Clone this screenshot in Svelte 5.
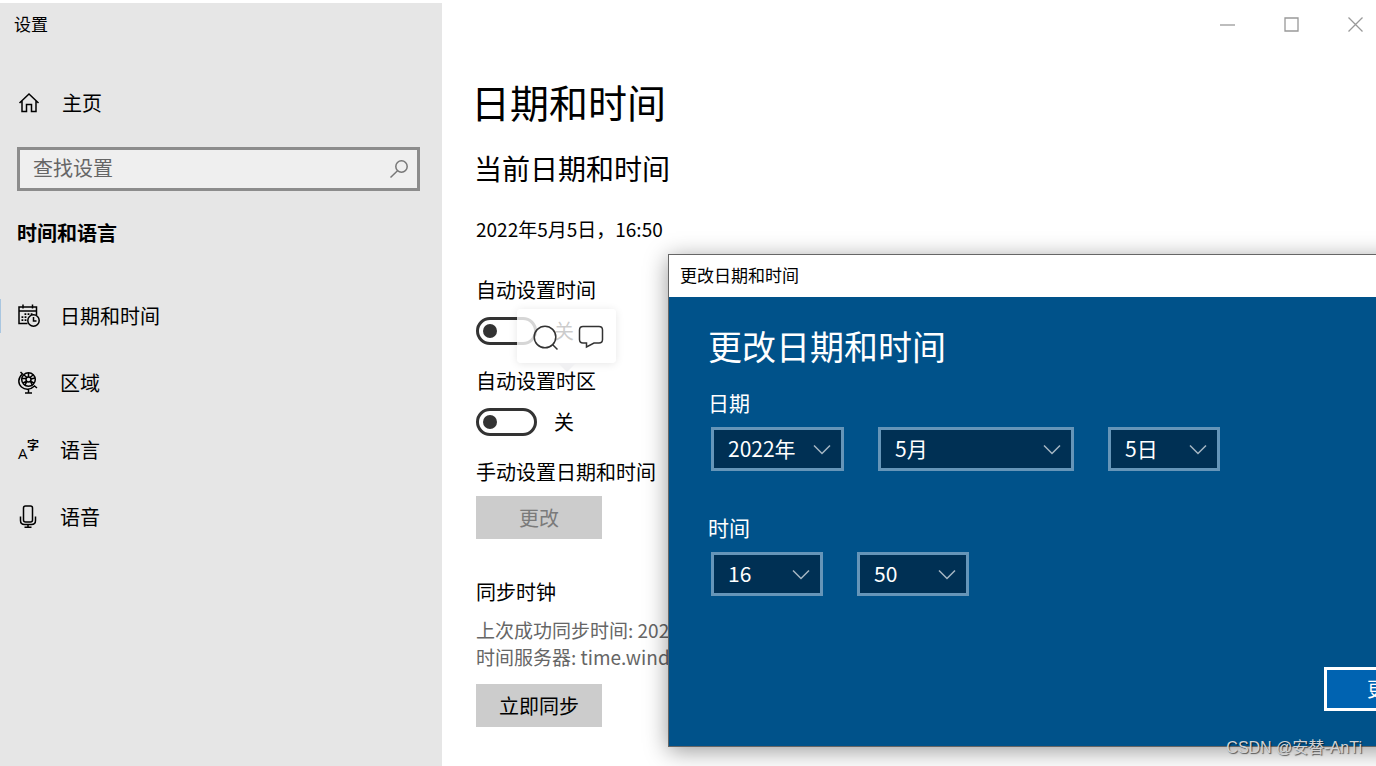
<script>
	let query = $state("")
	let autoTime = $state(false)
	let autoZone = $state(false)
	let active = $state("date")

	const pages = [
		{id: "date", label: "日期和时间"},
		{id: "region", label: "区域"},
		{id: "language", label: "语言"},
		{id: "speech", label: "语音"}
	]

	const dateFields = [
		{name: "年", size: "year", options: ["2022年", "2021年", "2020年"]},
		{name: "月", size: "month", options: ["5月", "6月", "7月"]},
		{name: "日", size: "short", options: ["5日", "6日", "7日"]}
	]
	const timeFields = [
		{name: "小时", size: "short", options: ["16", "17", "18"]},
		{name: "分钟", size: "short", options: ["50", "51", "52"]}
	]
</script>

{#snippet picker(field)}
	<div class="picker {field.size}">
		<select aria-label={field.name}>
			{#each field.options as option}
				<option>{option}</option>
			{/each}
		</select>
		<svg width="18" height="11" viewBox="0 0 18 11"><path d="M1 1.5l8 8 8-8"/></svg>
	</div>
{/snippet}

<div class="window">
	<aside>
		<div class="app-name">设置</div>
		<a class="home" href="#home">
			<svg width="22" height="22" viewBox="0 0 22 22">
				<path d="M1.5 11L11 2l9.500 9M4 9v10.500h4.500v-7h5v7H18V9"/>
			</svg>
			主页
		</a>
		<div class="search">
			<input type="text" aria-label="查找设置" placeholder="查找设置" bind:value={query}/>
			<svg width="20" height="20" viewBox="0 0 20 20">
				<circle cx="12.500" cy="7.500" r="5.700"/>
				<path d="M8.500 11.700L1.500 18.500"/>
			</svg>
		</div>
		<h3>时间和语言</h3>
		<nav>
			{#each pages as page}
				<a href="#{page.id}" class:active={active == page.id} onclick={() => active = page.id}>
					<svg width="24" height="24" viewBox="0 0 24 24">
						{#if page.id == "date"}
							<path d="M10.500 19.500H2V3h17.500v8M2 7h17.500M6 0.500v4M15.500 0.500v4"/>
							<path d="M7.500 10.200h8M4.500 13.200h6M4.500 16.200h5" stroke-dasharray="1.800 1.300" stroke-width="1.800"/>
							<circle cx="16.500" cy="16.500" r="5.700"/>
							<path d="M16.500 13v4h3"/>
						{:else if page.id == "region"}
							<circle cx="11.500" cy="8.500" r="6.800"/>
							<circle cx="11.500" cy="8.500" r="2.500"/>
							<path d="M11.500 2v4M5 7.500l4 0M14 8l4-1M9.800 10.500l-2 4M13.500 10.500l2 4M7 4l3 2.500M16 4l-3 2.500M6 12l3-1.500M17 12l-3-1.500"/>
							<path d="M3.500 1l2 2C0.500 7 1 13 4.500 16s9 3 13-1l2.500 2M11.500 18v4M8 22h7"/>
						{:else if page.id == "language"}
							<text class="latin" x="1" y="21" font-size="15">A</text>
							<text x="10" y="12" font-size="12" font-weight="bold">字</text>
						{:else}
							<rect x="6.500" y="1" width="9" height="16" rx="2"/>
							<path d="M3.500 11.500v4q0 4 4 4h7q4 0 4-4v-4M11 19.500V22M7.500 22.200h7"/>
						{/if}
					</svg>
					{page.label}
				</a>
			{/each}
		</nav>
	</aside>

	<main>
		<header>
			<button aria-label="最小化"><svg width="15" height="15" viewBox="0 0 15 15"><path d="M0 8h15"/></svg></button>
			<button aria-label="最大化"><svg width="15" height="15" viewBox="0 0 15 15"><path d="M1 1h13v13H1z"/></svg></button>
			<button aria-label="关闭"><svg width="15" height="15" viewBox="0 0 15 15"><path d="M0.500 0.500l14 14M14.500 0.500l-14 14"/></svg></button>
		</header>
		<h1>日期和时间</h1>
		<h2>当前日期和时间</h2>
		<p class="now">2022年5月5日，16:50</p>

		<label class="name" for="auto-time">自动设置时间</label>
		<div class="toggle">
			<input id="auto-time" type="checkbox" role="switch" bind:checked={autoTime}/>
			<span>{autoTime ? "开" : "关"}</span>
			<div class="bubble">
				<svg width="28" height="28" viewBox="0 0 28 28">
					<circle cx="14" cy="14" r="10.800"/>
					<path d="M21.500 21.500l5 5"/>
				</svg>
				<svg width="28" height="28" viewBox="0 0 28 28">
					<path d="M6 3.500h16q3.500 0 3.500 3.500v9.500q0 3.500-3.500 3.500h-5l-7.500 4v-4h-3.500q-3.500 0-3.500-3.500V7q0-3.500 3.500-3.500z"/>
				</svg>
			</div>
		</div>

		<label class="name zone" for="auto-zone">自动设置时区</label>
		<div class="toggle">
			<input id="auto-zone" type="checkbox" role="switch" bind:checked={autoZone}/>
			<span>{autoZone ? "开" : "关"}</span>
		</div>

		<div class="name manual">手动设置日期和时间</div>
		<button class="action" disabled>更改</button>

		<div class="name sync">同步时钟</div>
		<p class="details">上次成功同步时间: 2022/5/5 16:44:10<br/>时间服务器: time.windows.com</p>
		<button class="action now-sync">立即同步</button>
	</main>

	<section class="dialog" role="dialog" aria-labelledby="dialog-title">
		<div class="caption">更改日期和时间</div>
		<div class="content">
			<h2 id="dialog-title">更改日期和时间</h2>
			<div class="group">日期</div>
			<div class="fields">
				{#each dateFields as field}
					{@render picker(field)}
				{/each}
			</div>
			<div class="group time">时间</div>
			<div class="fields">
				{#each timeFields as field}
					{@render picker(field)}
				{/each}
			</div>
			<button class="confirm">更改</button>
		</div>
	</section>
	<div class="credit">CSDN @安替-AnTi</div>
</div>

<style>
	:global(body){
		background: #fff;
	}
	.window{
		position: relative;
		display: flex;
		min-height: 100vh;
		overflow: hidden;
		font-family: "Noto Sans CJK SC", sans-serif;
		font-size: 20px;
		line-height: 28px;
		color: #000;
	}
	*{
		box-sizing: border-box;
	}
	h1, h2, h3, p{
		margin: 0;
		font-weight: 400;
	}
	button, input, select{
		font: inherit;
		color: inherit;
	}
	svg{
		flex: none;
		overflow: visible;
		fill: none;
		stroke: currentColor;
		stroke-width: 1.5;
	}
	svg text{
		fill: currentColor;
		stroke: none;
	}
	.latin{
		font-family: "Open Sans", sans-serif;
	}

	aside{
		flex: 0 0 442px;
		margin-top: 3px;
		padding: 7px 22px 0 17px;
		background: #e6e6e6;
	}
	.app-name{
		margin-left: -3px;
		font-size: 17px;
	}
	aside a{
		display: flex;
		align-items: center;
		color: inherit;
		text-decoration: none;
	}
	.home{
		gap: 22px;
		height: 44px;
		margin-top: 43px;
		padding-left: 1px;
	}
	.search{
		position: relative;
		margin-top: 22px;
	}
	.search input{
		display: block;
		width: 100%;
		height: 44px;
		padding: 0 48px 4px 13px;
		border: 3px solid #8c8c8c;
		border-radius: 0;
		background: #efefef;
		outline: none;
	}
	.search input::placeholder{
		color: #666;
		opacity: 1;
	}
	.search svg{
		position: absolute;
		right: 11px;
		top: 12px;
		color: #777;
	}
	h3{
		margin-top: 28px;
		font-size: 20px;
		font-weight: 700;
	}
	nav{
		margin: 52px 0 0 -17px;
	}
	nav a{
		gap: 19px;
		height: 34px;
		margin-bottom: 33px;
		padding-left: 16px;
		border-left: 1px solid transparent;
	}
	nav a.active{
		border-color: #a9c6e0;
	}

	main{
		flex: 1;
		min-width: 0;
		padding-left: 34px;
	}
	header{
		display: flex;
		justify-content: flex-end;
		gap: 22px;
		height: 48px;
	}
	header button{
		display: grid;
		place-items: center;
		width: 42px;
		padding: 0;
		border: 0;
		background: none;
		color: #999;
	}
	header svg{
		stroke-width: 1.3;
	}
	h1{
		margin: 27px 0 0 -5px;
		font-size: 39px;
		line-height: 52px;
	}
	main h2{
		margin: 21px 0 0 -2px;
		font-size: 28px;
		line-height: 40px;
	}
	.now{
		margin-top: 27px;
		font-size: 19px;
	}
	.name{
		display: block;
		margin-top: 33px;
	}
	.zone, .manual{
		margin-top: 22px;
	}
	.sync{
		margin-top: 39px;
	}
	.toggle{
		position: relative;
		display: flex;
		align-items: center;
		gap: 17px;
		height: 28px;
		margin-top: 13px;
	}
	.toggle input{
		appearance: none;
		display: flex;
		align-items: center;
		width: 61px;
		height: 28px;
		margin: 0;
		padding: 0 4px;
		border: 3px solid #333;
		border-radius: 14px;
	}
	.toggle input::before{
		content: "";
		width: 14px;
		height: 14px;
		border-radius: 50%;
		background: #333;
	}
	.toggle input:checked{
		justify-content: flex-end;
	}
	.bubble{
		position: absolute;
		left: 41px;
		top: -8px;
		display: flex;
		align-items: center;
		justify-content: center;
		gap: 18px;
		width: 99px;
		height: 54px;
		padding: 1px 0 0 2px;
		border-radius: 4px;
		background: rgb(255,255,255,0.8);
		box-shadow: 0 1px 8px rgb(0,0,0,0.1);
		color: #333;
	}
	.bubble::after{
		content: "";
		position: absolute;
		top: 100%;
		left: 41px;
		border: 9px solid transparent;
		border-top-color: #f0f0f2;
		border-bottom: 0;
	}
	.action{
		display: block;
		width: 126px;
		height: 43px;
		margin-top: 10px;
		padding: 0;
		border: 0;
		background: #ccc;
	}
	.action:disabled{
		color: #7a7a7a;
	}
	.details{
		margin-top: 10px;
		font-size: 19px;
		line-height: 27px;
		color: #666;
		white-space: nowrap;
	}
	.now-sync{
		margin-top: 14px;
	}

	.dialog{
		position: absolute;
		left: 668px;
		right: -114px;
		top: 254px;
		border: 1px solid #666;
		background: #00528a;
		box-shadow: 0 4px 22px rgb(0,0,0,0.4);
		color: #fff;
	}
	.caption{
		height: 42px;
		padding: 6px 11px;
		background: #fff;
		color: #000;
		font-size: 17px;
	}
	.content{
		padding: 25px 39px 35px;
	}
	.content h2{
		font-size: 34px;
		line-height: 48px;
	}
	.group{
		margin-top: 18px;
		font-size: 21px;
	}
	.time{
		margin-top: 42px;
	}
	.fields{
		display: flex;
		gap: 34px;
		margin: 11px 0 0 3px;
	}
	.picker{
		position: relative;
		width: 112px;
	}
	.year{
		width: 133px;
	}
	.month{
		width: 196px;
	}
	.picker select{
		appearance: none;
		display: block;
		width: 100%;
		height: 44px;
		padding: 0 14px 2px;
		border: 3px solid #6695b8;
		border-radius: 0;
		background: #003054;
		font-size: 21px;
	}
	.picker svg{
		position: absolute;
		right: 13px;
		top: 17px;
		color: #a6b6c3;
		pointer-events: none;
	}
	.confirm{
		display: block;
		width: 126px;
		height: 44px;
		margin: 71px 0 0 auto;
		border: 3px solid #fff;
		background: #0063b1;
	}
	.credit{
		position: absolute;
		right: 14px;
		bottom: 4px;
		font-family: "Liberation Sans", "Noto Sans CJK SC", sans-serif;
		font-size: 16px;
		color: #d2d2d2;
		text-shadow: 1px 1px 1px rgb(0,0,0,0.6);
	}
</style>
